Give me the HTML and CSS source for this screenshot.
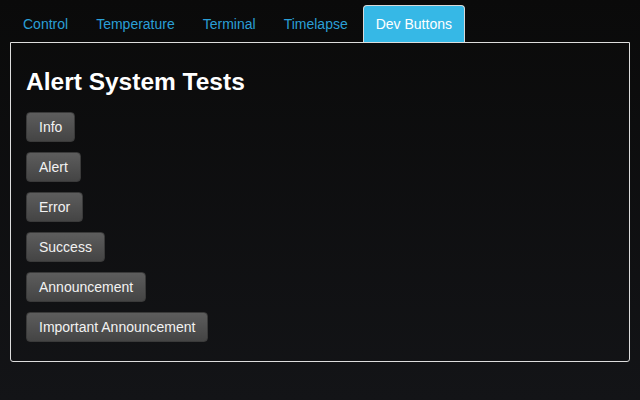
FILE: index.html
```html
<!DOCTYPE html>
<html>
<head>
<meta charset="utf-8">
<link rel="stylesheet" href="styles.css">
</head>
<body>
<div class="page">
  <ul class="tabs">
    <li><a class="tab">Control</a></li>
    <li><a class="tab">Temperature</a></li>
    <li><a class="tab">Terminal</a></li>
    <li><a class="tab">Timelapse</a></li>
    <li><a class="tab active">Dev Buttons</a></li>
  </ul>
  <div class="panel">
    <h3 class="title">Alert System Tests</h3>
    <div class="buttons">
      <div><button class="btn">Info</button></div>
      <div><button class="btn">Alert</button></div>
      <div><button class="btn">Error</button></div>
      <div><button class="btn">Success</button></div>
      <div><button class="btn">Announcement</button></div>
      <div><button class="btn">Important Announcement</button></div>
    </div>
  </div>
</div>
</body>
</html>
```

FILE: styles.css
```css
html, body {
  margin: 0;
  padding: 0;
  height: 100%;
}
body {
  background: linear-gradient(#0a0a0a, #131417);
  font-family: "Liberation Sans", Arial, sans-serif;
  font-size: 14px;
  line-height: 20px;
  color: #eee;
}
.page {
  padding: 5px 10px 0;
}
.tabs {
  list-style: none;
  margin: 0;
  padding: 0;
  display: flex;
}
.tabs li {
  margin-right: 2px;
}
.tab {
  display: block;
  padding: 8px 12px;
  border: 1px solid transparent;
  border-bottom: none;
  border-radius: 4px 4px 0 0;
  color: #2a9fd6;
  cursor: pointer;
}
.tab.active {
  background: #36b8e6;
  border-color: #d8d8d8;
  color: #fff;
}
.panel {
  border: 1px solid #ddd;
  border-radius: 0 0 3px 3px;
  padding: 15px 15px 19px;
}
.title {
  margin: 9px 0 15px;
  font-size: 24.5px;
  line-height: 30px;
  font-weight: bold;
  color: #fff;
}
.buttons {
  display: flex;
  flex-direction: column;
  gap: 10px;
}
.btn {
  font-family: "Liberation Sans", Arial, sans-serif;
  font-size: 14px;
  line-height: 20px;
  padding: 4px 12px;
  border: 1px solid #3a3a3a;
  border-radius: 4px;
  background: linear-gradient(#5d5d5d, #444);
  color: #f2f2f2;
  margin: 0;
}
```
